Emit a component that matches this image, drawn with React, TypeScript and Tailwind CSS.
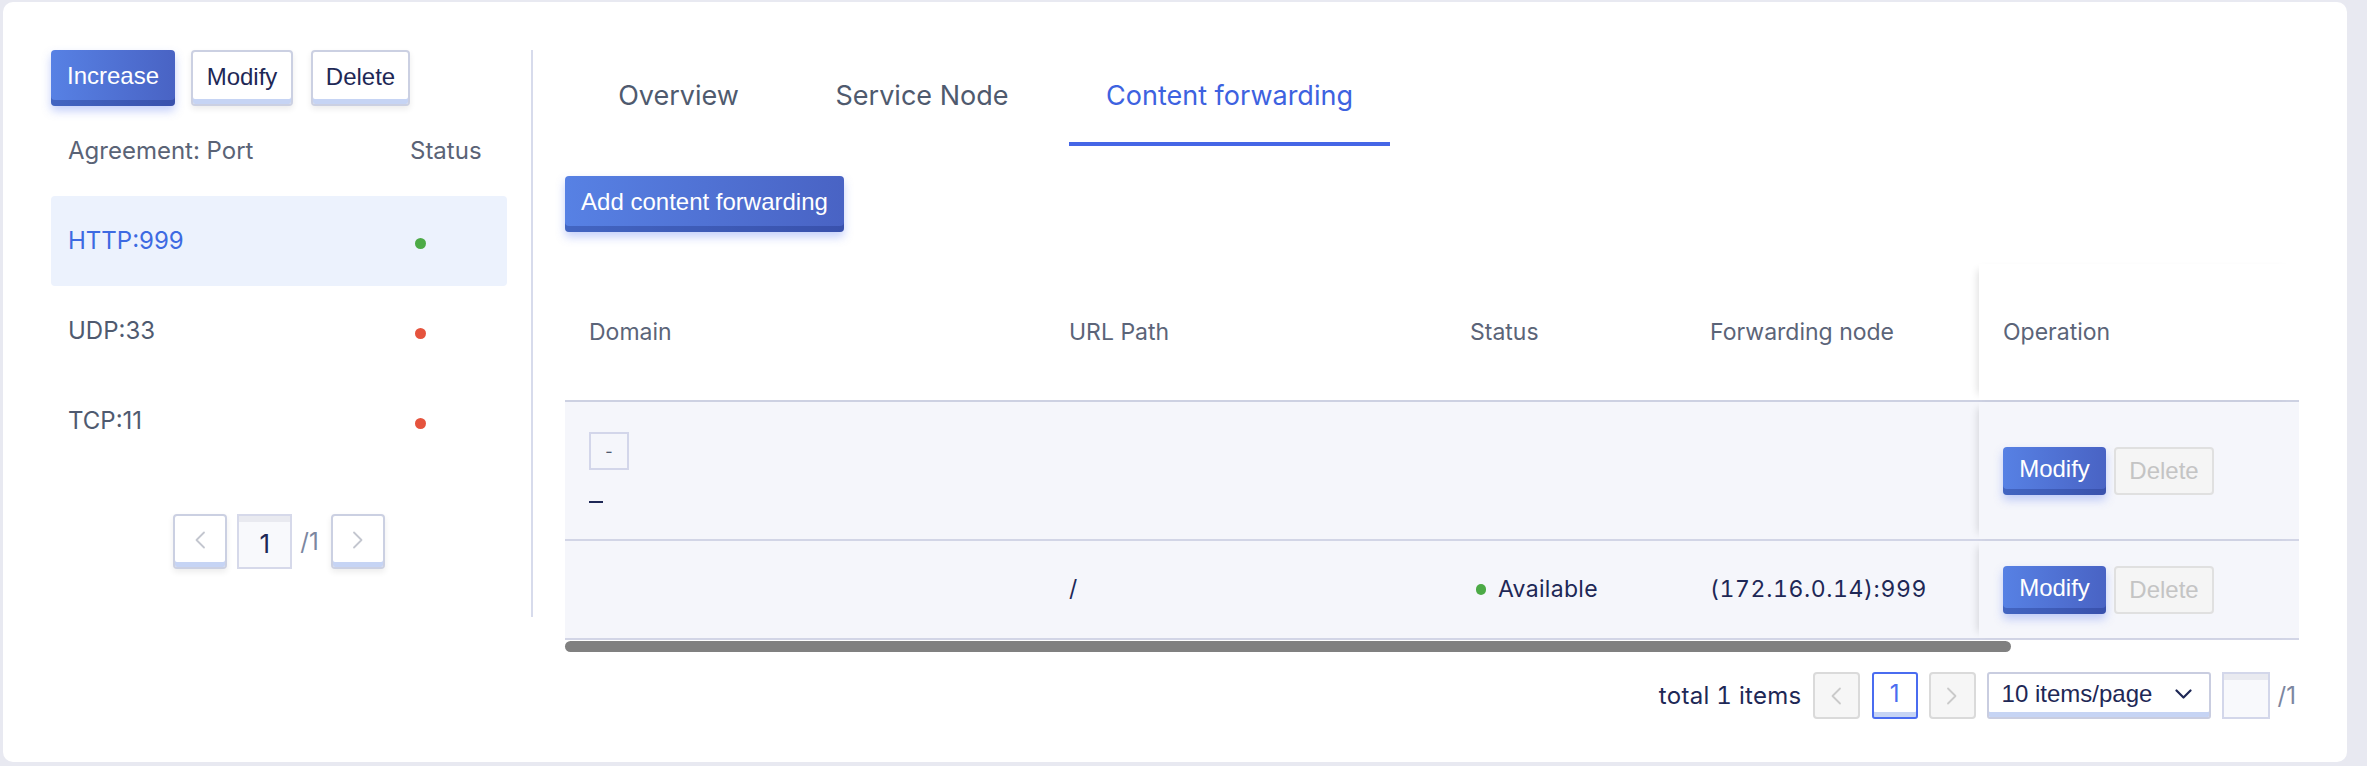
import React from 'react'

const primaryBtn =
  "font-['Liberation_Sans',Arial,sans-serif] text-[24px] text-white rounded-[4px] bg-[linear-gradient(90deg,#5781e4,#4963c4)] shadow-[inset_0_-6px_0_rgba(30,50,130,0.35),0_5px_10px_rgba(90,120,240,0.35)] flex items-center justify-center pb-[4px]"

const secondaryBtn =
  "font-['Liberation_Sans',Arial,sans-serif] text-[24px] text-[#1e2856] rounded-[4px] bg-white border-2 border-[#cbd0e2] shadow-[inset_0_-5px_0_#c6d4f4,0_3px_6px_rgba(0,0,0,0.08)] flex items-center justify-center pb-[3px]"

const disabledBtn =
  "font-['Liberation_Sans',Arial,sans-serif] text-[24px] text-[#c4c4c4] rounded-[4px] bg-[#f5f5f5] border-2 border-[#e0e0e0] flex items-center justify-center"

function Chevron({ dir, color }: { dir: 'left' | 'right' | 'down'; color: string }) {
  if (dir === 'down') {
    return (
      <svg width="17" height="10" viewBox="0 0 17 10" fill="none">
        <polyline points="1.5,1.5 8.5,8.5 15.5,1.5" stroke={color} strokeWidth="2.2" strokeLinecap="round" strokeLinejoin="round" />
      </svg>
    )
  }
  return (
    <svg width="12" height="18" viewBox="0 0 12 18" fill="none">
      {dir === 'left' ? (
        <polyline points="10,1.5 2.5,9 10,16.5" stroke={color} strokeWidth="1.8" strokeLinecap="round" strokeLinejoin="round" />
      ) : (
        <polyline points="2,1.5 9.5,9 2,16.5" stroke={color} strokeWidth="1.8" strokeLinecap="round" strokeLinejoin="round" />
      )}
    </svg>
  )
}

const ports = [
  { name: 'HTTP:999', ok: true, active: true },
  { name: 'UDP:33', ok: false, active: false },
  { name: 'TCP:11', ok: false, active: false },
]

function LeftPanel() {
  return (
    <div className="w-[456px] flex flex-col">
      <div className="flex h-[56px]">
        <button className={`${primaryBtn} w-[124px] h-[56px]`}>Increase</button>
        <button className={`${secondaryBtn} w-[102px] h-[56px] ml-[16px]`}>Modify</button>
        <button className={`${secondaryBtn} w-[99px] h-[56px] ml-[18px]`}>Delete</button>
      </div>

      <div className="flex items-center h-[90px] text-[24px] text-[#5a6376]">
        <div className="flex-1 pl-[17px]">Agreement: Port</div>
        <div className="w-[97px]">Status</div>
      </div>

      {ports.map((p) => (
        <div
          key={p.name}
          className={`flex items-center h-[90px] text-[24px] rounded-[4px] ${p.active ? 'bg-[#ecf2fd] text-[#3d6ae2]' : 'text-[#4f5a6f]'}`}
        >
          <div className="flex-1 pl-[17px]">{p.name}</div>
          <div className="w-[97px] pl-[5px] pt-[4px]">
            <span className={`block w-[11px] h-[11px] rounded-full ${p.ok ? 'bg-[#4caa46]' : 'bg-[#e5533d]'}`} />
          </div>
        </div>
      ))}

      <div className="flex items-center justify-center mt-[48px] h-[55px]">
        <button className="w-[54px] h-[55px] rounded-[4px] bg-white border-2 border-[#cbd0e2] shadow-[inset_0_-5px_0_#c6d4f4,0_3px_6px_rgba(0,0,0,0.08)] flex items-center justify-center pb-[3px]">
          <Chevron dir="left" color="#c3c6cf" />
        </button>
        <div className="w-[55px] h-[55px] ml-[10px] border-2 border-[#d6d9ea] bg-[#f8f9fc] shadow-[inset_0_6px_0_#e9eaf0] flex items-center justify-center text-[26px] text-[#1e2856] pt-[4px]">
          1
        </div>
        <span className="ml-[8px] text-[24px] text-[#7c86a0]">/1</span>
        <button className="w-[54px] h-[55px] ml-[12px] rounded-[4px] bg-white border-2 border-[#cbd0e2] shadow-[inset_0_-5px_0_#c6d4f4,0_3px_6px_rgba(0,0,0,0.08)] flex items-center justify-center pb-[3px]">
          <Chevron dir="right" color="#c3c6cf" />
        </button>
      </div>
    </div>
  )
}

const tabs = [
  { label: 'Overview', w: 'w-[191px]', active: false },
  { label: 'Service Node', w: 'w-[244px] ml-[26px]', active: false },
  { label: 'Content forwarding', w: 'w-[321px] ml-[25px]', active: true },
]

const opShadow = 'shadow-[-7px_0_8px_-6px_rgba(0,0,0,0.14)]'

function ContentTable() {
  return (
    <div className="mt-[32px] w-[1734px] text-[23px]">
      {/* header */}
      <div className="flex h-[138px] bg-white border-b-2 border-[#cdd1e2] text-[#5b6478]">
        <div className="w-[480px] pl-[24px] flex items-center">Domain</div>
        <div className="w-[401px] pl-[24px] flex items-center">URL Path</div>
        <div className="w-[240px] pl-[24px] flex items-center">Status</div>
        <div className="w-[293px] pl-[24px] flex items-center">Forwarding node</div>
        <div className={`w-[320px] pl-[24px] flex items-center bg-white ${opShadow}`}>Operation</div>
      </div>

      {/* row 1 */}
      <div className="flex h-[139px] bg-[#f5f6fb] border-b-2 border-[#d2d5e6] text-[#1e2856]">
        <div className="w-[480px] pl-[24px] pt-[30px] flex flex-col">
          <div className="w-[40px] h-[38px] border-2 border-[#d3d6ea] flex items-center justify-center text-[16px] text-[#4f5a6f] leading-none">
            -
          </div>
          <div className="mt-[14px] h-[36px] flex items-center">
            <span className="block w-[14px] h-[2px] bg-[#1e2856]" />
          </div>
        </div>
        <div className="w-[401px]" />
        <div className="w-[240px]" />
        <div className="w-[293px]" />
        <div className={`w-[320px] pl-[24px] flex items-center bg-[#f5f6fb] ${opShadow}`}>
          <button className={`${primaryBtn} w-[103px] h-[48px]`}>Modify</button>
          <button className={`${disabledBtn} w-[100px] h-[48px] ml-[8px]`}>Delete</button>
        </div>
      </div>

      {/* row 2 */}
      <div className="flex h-[99px] bg-[#f5f6fb] border-b-2 border-[#d2d5e6] text-[#1e2856]">
        <div className="w-[480px]" />
        <div className="w-[401px] pl-[24px] flex items-center">/</div>
        <div className="w-[240px] pl-[30px] flex items-center">
          <span className="block w-[10px] h-[11px] rounded-full bg-[#4caa46]" />
          <span className="ml-[12px] tracking-[0.3px]">Available</span>
        </div>
        <div className="w-[293px] pl-[24px] flex items-center tabular-nums tracking-[0.6px]">(172.16.0.14):999</div>
        <div className={`w-[320px] pl-[24px] flex items-center bg-[#f5f6fb] ${opShadow}`}>
          <button className={`${primaryBtn} w-[103px] h-[48px]`}>Modify</button>
          <button className={`${disabledBtn} w-[100px] h-[48px] ml-[8px]`}>Delete</button>
        </div>
      </div>

      {/* horizontal scrollbar */}
      <div className="mt-[1px] h-[11px] w-[1446px] rounded-full bg-[#808080]" />
    </div>
  )
}

function BottomPager() {
  return (
    <div className="mt-[20px] h-[47px] flex items-center justify-end pr-[3px] text-[#1e2856]">
      <span className="text-[24px] tabular-nums tracking-[0.3px]">total 1 items</span>
      <button className="ml-[11px] w-[47px] h-[47px] rounded-[4px] bg-[#f6f6f6] border-2 border-[#dadada] flex items-center justify-center">
        <Chevron dir="left" color="#cacaca" />
      </button>
      <div className="ml-[12px] w-[46px] h-[47px] rounded-[3px] bg-white border-2 border-[#4a6cf0] shadow-[inset_0_-5px_0_#c6d4f4] flex items-center justify-center text-[24px] text-[#4a6cf0] pb-[3px]">
        1
      </div>
      <button className="ml-[11px] w-[47px] h-[47px] rounded-[4px] bg-[#f6f6f6] border-2 border-[#dadada] flex items-center justify-center">
        <Chevron dir="right" color="#cacaca" />
      </button>
      <div className="ml-[11px] w-[224px] h-[47px] rounded-[3px] bg-white border-2 border-[#c9cde0] shadow-[inset_0_-5px_0_#c6d4f4] flex items-center pl-[13px] pr-[17px] pb-[3px]">
        <span className="flex-1 font-['Liberation_Sans',Arial,sans-serif] text-[24px]">10 items/page</span>
        <Chevron dir="down" color="#1e2856" />
      </div>
      <div className="ml-[11px] w-[48px] h-[47px] border-2 border-[#d3d7ea] bg-[#f8f9fc] shadow-[inset_0_6px_0_#e9eaf0]" />
      <span className="ml-[8px] text-[24px] text-[#7c86a0]">/1</span>
    </div>
  )
}

function RightPanel() {
  return (
    <div className="w-[1734px] ml-[32px] flex flex-col">
      <div className="flex h-[96px] ml-[18px]">
        {tabs.map((t) => (
          <div
            key={t.label}
            className={`${t.w} h-full flex items-center justify-center border-b-4 text-[27px] ${t.active ? 'border-[#4566e6] text-[#3d62e0]' : 'border-transparent text-[#4f5a6e]'}`}
          >
            {t.label}
          </div>
        ))}
      </div>

      <button className={`${primaryBtn} mt-[30px] w-[279px] h-[56px]`}>Add content forwarding</button>

      <ContentTable />
      <BottomPager />
    </div>
  )
}

export default function App() {
  return (
    <div className="w-[2367px] h-[766px] bg-[#e8e9f1] pt-[2px] pl-[3px] font-['Inter',sans-serif] overflow-hidden">
      <div className="w-[2344px] h-[760px] bg-white rounded-[10px] flex pl-[48px] pt-[48px]">
        <LeftPanel />
        <div className="ml-[24px] w-[2px] h-[567px] bg-[#d7dbec]" />
        <RightPanel />
      </div>
    </div>
  )
}
